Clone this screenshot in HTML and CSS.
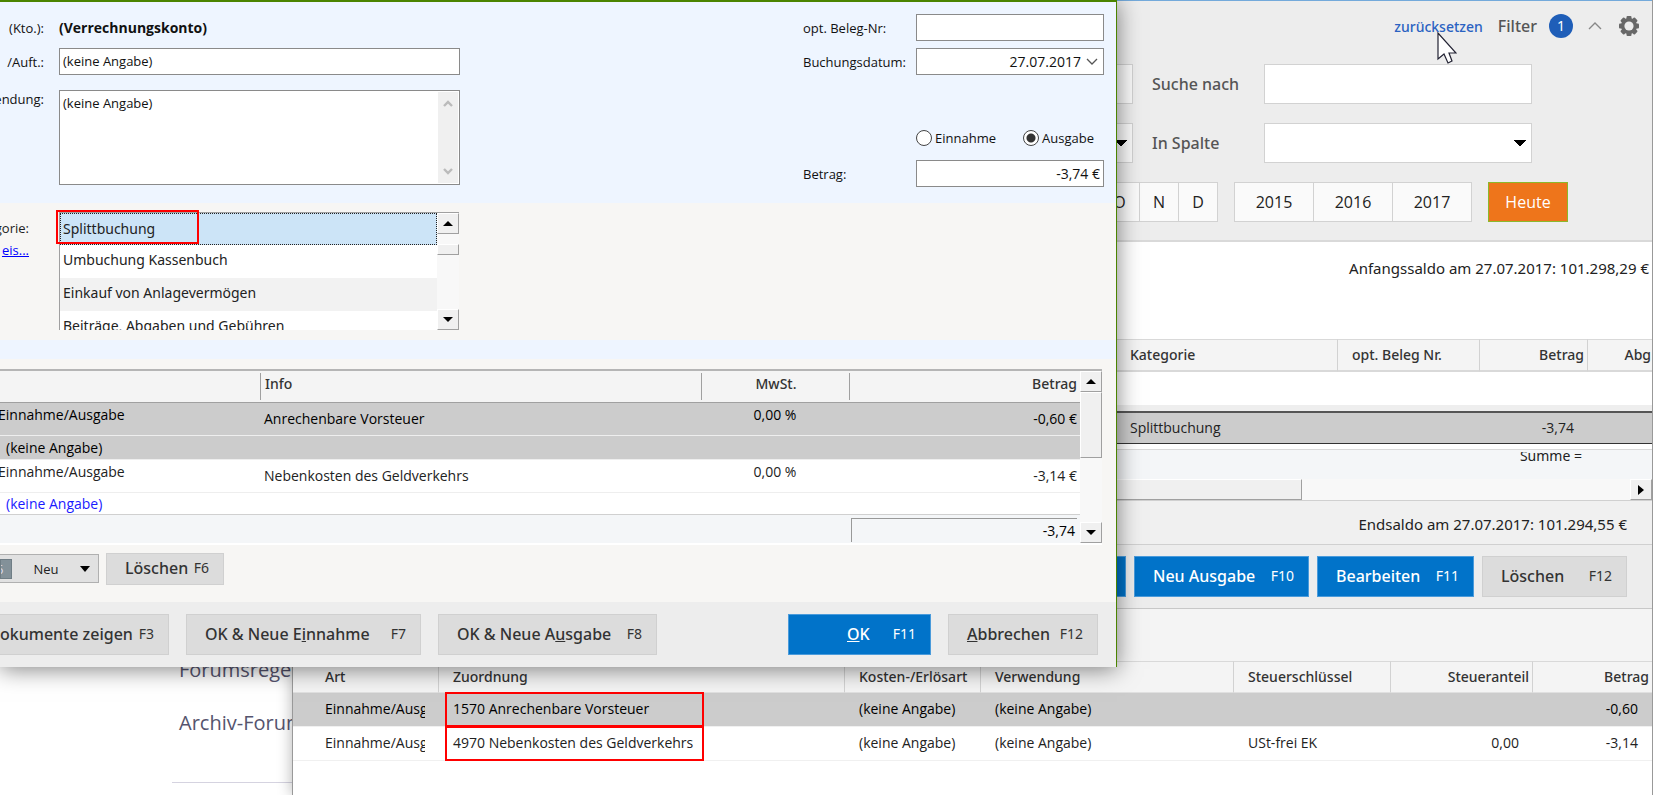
FILE: index.html
```html
<!DOCTYPE html>
<html lang="de">
<head>
    <meta charset="UTF-8">
    <meta name="viewport" content="width=device-width, initial-scale=1.0">
    <title>Splittbuchung</title>
    <link rel="stylesheet" href="styles.css">
</head>
<body>

    <!-- Forum im Hintergrund -->
    <nav class="forum">
        <a href="#">Forumsregeln</a>
        <a href="#">Archiv-Forum</a>
    </nav>

    <!-- Hauptfenster -->
    <main class="main-window">
        <section class="filter">
            <div class="filter-head">
                <a href="#" class="reset">zurücksetzen</a>
                <span class="filter-title">Filter</span>
                <span class="badge">1</span>
                <svg class="chevron" width="14" height="8" viewBox="0 0 14 8"><path d="M1 7l6-6 6 6" fill="none" stroke="#888" stroke-width="1.4"/></svg>
                <svg class="gear" width="22" height="22" viewBox="0 0 22 22">
                    <g fill="#686868">
                        <rect x="8.5" y="1" width="5" height="20" rx="1"/>
                        <rect x="8.5" y="1" width="5" height="20" rx="1" transform="rotate(45 11 11)"/>
                        <rect x="8.5" y="1" width="5" height="20" rx="1" transform="rotate(90 11 11)"/>
                        <rect x="8.5" y="1" width="5" height="20" rx="1" transform="rotate(135 11 11)"/>
                        <circle cx="11" cy="11" r="8"/>
                    </g>
                    <circle cx="11" cy="11" r="4.6" fill="#ededed"/>
                </svg>
            </div>
            <div class="filter-row">
                <input type="text" class="filter-field first" aria-label="Zeitraum">
                <label for="search">Suche nach</label>
                <input type="text" id="search" class="filter-field">
            </div>
            <div class="filter-row">
                <select class="filter-field first" aria-label="Konto"><option></option></select>
                <label for="column">In Spalte</label>
                <select id="column" class="filter-field"><option></option></select>
            </div>
            <div class="filter-row periods">
                <div class="group months">
                    <button>O</button><button>N</button><button>D</button>
                </div>
                <div class="group years">
                    <button>2015</button><button>2016</button><button>2017</button>
                </div>
                <button class="today">Heute</button>
            </div>
        </section>

        <p class="opening">Anfangssaldo am 27.07.2017: 101.298,29 €</p>

        <table class="bookings">
            <colgroup><col><col class="c-cat"><col class="c-doc"><col class="c-sum"><col class="c-abg"></colgroup>
            <thead>
                <tr><th></th><th>Kategorie</th><th>opt. Beleg Nr.</th><th class="num">Betrag</th><th class="num">Abg</th></tr>
            </thead>
            <tbody>
                <tr class="empty"><td colspan="5"></td></tr>
                <tr class="selected"><td></td><td>Splittbuchung</td><td></td><td class="num">-3,74</td><td></td></tr>
            </tbody>
        </table>
        <div class="total"><span>Summe =</span></div>
        <div class="hscroll">
            <div class="thumb"></div>
            <button class="scroll-btn" aria-label="Nach rechts"><svg width="6" height="10" viewBox="0 0 6 10"><path d="M0 0l6 5-6 5z"/></svg></button>
        </div>
        <p class="closing">Endsaldo am 27.07.2017: 101.294,55 €</p>
        <div class="actions">
            <button class="btn primary stub" aria-label="Neu Einnahme"></button>
            <button class="btn primary b-new">Neu Ausgabe<kbd>F10</kbd></button>
            <button class="btn primary b-edit">Bearbeiten<kbd>F11</kbd></button>
            <button class="btn b-del">Löschen<kbd>F12</kbd></button>
        </div>
        <div class="spacer"></div>

        <table class="details">
            <colgroup><col class="d-art"><col><col class="d-cost"><col class="d-use"><col class="d-key"><col class="d-tax"><col class="d-sum"></colgroup>
            <thead>
                <tr><th>Art</th><th>Zuordnung</th><th>Kosten-/Erlösart</th><th>Verwendung</th><th>Steuerschlüssel</th><th class="num">Steueranteil</th><th class="num">Betrag</th></tr>
            </thead>
            <tbody>
                <tr class="selected">
                    <td><div class="clip">Einnahme/Ausgabe</div></td>
                    <td class="marked">1570 Anrechenbare Vorsteuer</td>
                    <td>(keine Angabe)</td><td>(keine Angabe)</td><td></td><td></td><td class="num">-0,60</td>
                </tr>
                <tr>
                    <td><div class="clip">Einnahme/Ausgabe</div></td>
                    <td class="marked">4970 Nebenkosten des Geldverkehrs</td>
                    <td>(keine Angabe)</td><td>(keine Angabe)</td><td>USt-frei EK</td><td class="num">0,00</td><td class="num">-3,14</td>
                </tr>
            </tbody>
        </table>
    </main>

    <!-- Buchungsdialog -->
    <form class="dialog">
        <section class="head-form">
            <div class="form-left">
                <div class="row"><span class="lbl">(Kto.):</span><strong>(Verrechnungskonto)</strong></div>
                <div class="row"><label class="lbl" for="payee">/Auft.:</label><input type="text" id="payee" class="field" value="(keine Angabe)"></div>
                <div class="row note-row">
                    <label class="lbl" for="note">endung:</label>
                    <div class="note">
                        <textarea id="note">(keine Angabe)</textarea>
                        <div class="note-scroll">
                            <svg width="10" height="8" viewBox="0 0 10 8"><path d="M1 6l4-4 4 4" fill="none" stroke="#bbb" stroke-width="2.4"/></svg>
                            <svg width="10" height="8" viewBox="0 0 10 8"><path d="M1 2l4 4 4-4" fill="none" stroke="#bbb" stroke-width="2.4"/></svg>
                        </div>
                    </div>
                </div>
            </div>
            <div class="form-right">
                <div class="row"><label for="doc">opt. Beleg-Nr:</label><input type="text" id="doc" class="field"></div>
                <div class="row"><label for="date">Buchungsdatum:</label><select id="date" class="field date"><option>27.07.2017</option></select></div>
                <div class="row radios">
                    <label><input type="radio" name="kind">Einnahme</label>
                    <label><input type="radio" name="kind" checked>Ausgabe</label>
                </div>
                <div class="row"><label for="amount">Betrag:</label><input type="text" id="amount" class="field amount" value="-3,74 €"></div>
            </div>
        </section>

        <section class="category">
            <div class="cat-label"><span>gorie:</span><a href="#">eis...</a></div>
            <div class="listbox">
                <ul role="listbox" aria-label="Kategorie">
                    <li role="option" aria-selected="true">Splittbuchung</li>
                    <li role="option">Umbuchung Kassenbuch</li>
                    <li role="option">Einkauf von Anlagevermögen</li>
                    <li role="option">Beiträge, Abgaben und Gebühren</li>
                </ul>
                <div class="vscroll">
                    <button type="button" class="scroll-btn" aria-label="Nach oben"><svg width="10" height="5" viewBox="0 0 10 5"><path d="M0 5l5-5 5 5z"/></svg></button>
                    <div class="thumb"></div>
                    <button type="button" class="scroll-btn" aria-label="Nach unten"><svg width="10" height="5" viewBox="0 0 10 5"><path d="M0 0l5 5 5-5z"/></svg></button>
                </div>
                <div class="marker"></div>
            </div>
        </section>

        <div class="strip"></div>

        <section class="splits">
            <div class="grid-box">
                <div class="grid-content">
                    <table class="split-table">
                        <colgroup><col class="s-kind"><col><col class="s-vat"><col class="s-sum"></colgroup>
                        <thead>
                            <tr><th></th><th>Info</th><th class="mid">MwSt.</th><th class="num">Betrag</th></tr>
                        </thead>
                        <tbody>
                            <tr class="entry selected"><td>Einnahme/Ausgabe</td><td class="low">Anrechenbare Vorsteuer</td><td class="mid">0,00 %</td><td class="num low">-0,60 €</td></tr>
                            <tr class="sub selected"><td colspan="4">(keine Angabe)</td></tr>
                            <tr class="entry"><td>Einnahme/Ausgabe</td><td class="low">Nebenkosten des Geldverkehrs</td><td class="mid">0,00 %</td><td class="num low">-3,14 €</td></tr>
                            <tr class="sub link"><td colspan="4">(keine Angabe)</td></tr>
                        </tbody>
                    </table>
                    <div class="split-total"><output>-3,74</output></div>
                </div>
                <div class="vscroll">
                    <button type="button" class="scroll-btn" aria-label="Nach oben"><svg width="10" height="5" viewBox="0 0 10 5"><path d="M0 5l5-5 5 5z"/></svg></button>
                    <div class="thumb"></div>
                    <button type="button" class="scroll-btn" aria-label="Nach unten"><svg width="10" height="5" viewBox="0 0 10 5"><path d="M0 0l5 5 5-5z"/></svg></button>
                </div>
            </div>
            <div class="split-actions">
                <button type="button" class="new-btn"><kbd>6</kbd><span>Neu</span><svg width="10" height="6" viewBox="0 0 10 6"><path d="M0 0h10L5 6z"/></svg></button>
                <button type="button" class="btn small">Löschen<kbd>F6</kbd></button>
            </div>
        </section>

        <footer class="dialog-footer">
            <button type="button" class="btn f-docs">okumente zeigen<kbd>F3</kbd></button>
            <button type="button" class="btn f-in"><span>OK &amp; Neue E<u>i</u>nnahme</span><kbd>F7</kbd></button>
            <button type="button" class="btn f-out"><span>OK &amp; Neue A<u>u</u>sgabe</span><kbd>F8</kbd></button>
            <button type="button" class="btn primary f-ok"><span><u>O</u>K</span><kbd>F11</kbd></button>
            <button type="button" class="btn f-cancel"><span><u>A</u>bbrechen</span><kbd>F12</kbd></button>
        </footer>
    </form>

    <svg class="cursor" width="20" height="32" viewBox="0 0 20 32"><path d="M1 1v26l6-5 4 9 4-2-3-8h7z" fill="#fff" stroke="#223" stroke-width="1.2"/></svg>

</body>
</html>
```
FILE: styles.css
```css
*, *::after {
    box-sizing: border-box;
}
body {
    font-family: 'Open Sans', 'Noto Sans', sans-serif;
    font-size: 14px;
    color: #222;
    background-color: #fff;
    margin: 0;
    position: relative;
    height: 100vh;
    overflow: hidden;
}
p {
    margin: 0;
}
button, input, select, textarea {
    font: inherit;
    color: inherit;
    margin: 0;
}
button {
    padding: 0;
}
kbd {
    font-family: inherit;
}
select {
    appearance: none;
    border-radius: 0;
}
table {
    width: 100%;
    table-layout: fixed;
    border-collapse: separate;
    border-spacing: 0;
}
th {
    font-weight: 500;
    text-align: left;
    color: #333;
}
th, td {
    padding: 0;
    white-space: nowrap;
}
th, .btn, .filter-head, .filter-row label, .opening, .closing, .total, .listbox {
    font-family: 'Noto Sans', 'Open Sans', sans-serif;
}
.num {
    text-align: right;
}

/* Forum */
.forum {
    position: absolute;
    left: 172px;
    bottom: 12px;
    width: 300px;
    border-bottom: 1px solid #d5d3e0;
    padding: 0 0 33px 7px;
}
.forum a {
    display: block;
    color: #55546e;
    font-size: 20px;
    line-height: 53px;
    text-decoration: none;
}

/* Hauptfenster */
.main-window {
    position: absolute;
    top: 0;
    right: 0;
    bottom: 0;
    left: 292px;
    background-color: #fff;
    border-left: 1px solid #999;
    border-right: 1px solid #999;
    box-shadow: 0 0 14px rgba(0, 0, 0, 0.3);
}
.filter {
    background-color: #ededed;
    border-top: 1px solid #74aadb;
    border-bottom: 2px solid #d9d9d9;
    height: 242px;
}
.filter-head {
    display: flex;
    justify-content: flex-end;
    align-items: center;
    height: 50px;
    padding-right: 12px;
}
.reset {
    color: #2a62c2;
    font-weight: 500;
    text-decoration: none;
    margin-right: 15px;
}
.filter-title {
    font-size: 16px;
    font-weight: 500;
    color: #555;
    margin-right: 12px;
}
.badge {
    width: 24px;
    height: 24px;
    border-radius: 50%;
    background-color: #1f5eb8;
    color: #fff;
    line-height: 24px;
    text-align: center;
    margin-right: 15px;
}
.chevron {
    margin-right: 16px;
}
.filter-row {
    display: flex;
    justify-content: flex-end;
    align-items: center;
    height: 40px;
    margin: 13px 120px 19px 24px;
}
.filter-row + .filter-row {
    margin-top: 0;
}
.filter-row label {
    width: 131px;
    padding-left: 19px;
    font-size: 16px;
    font-weight: 500;
    color: #555;
}
.filter-field {
    width: 268px;
    height: 40px;
    border: 1px solid #d2d2d2;
    background-color: #fff;
    padding: 0 10px;
}
.filter-field.first {
    flex: 1;
    background-color: #fafafa;
}
select.filter-field {
    background-image: linear-gradient(to bottom left, #000 50%, transparent 52%), linear-gradient(to bottom right, #000 50%, transparent 52%);
    background-size: 6px 6px;
    background-position: right 11px center, right 5px center;
    background-repeat: no-repeat;
}
.filter-row.periods {
    margin-right: 84px;
    gap: 16px;
}
.group {
    display: flex;
    height: 40px;
    border: 1px solid #d2d2d2;
}
.group button {
    width: 39px;
    border: 0;
    background-color: #fafafa;
    font-size: 16px;
}
.group button + button {
    border-left: 1px solid #d2d2d2;
}
.years {
    width: 238px;
}
.years button {
    flex: 1;
}
.today {
    width: 80px;
    height: 40px;
    border: 1px solid #8cb82b;
    background-color: #ee751b;
    color: #fff;
    font-size: 16px;
}
.opening, .closing {
    font-size: 15px;
    text-align: right;
}
.opening {
    height: 97px;
    padding: 13px 3px 0 0;
    line-height: 26px;
}
.bookings th {
    height: 33px;
    background-color: #f4f4f4;
    border-top: 1px solid #d9d9d9;
    border-bottom: 2px solid #d9d9d9;
    border-right: 1px solid #d2d2d2;
    padding: 0 3px 2px 14px;
}
.bookings th:last-child {
    border-right: 0;
    padding-right: 1px;
}
.bookings .empty td {
    height: 39px;
    background: linear-gradient(#fff 33px, #eee 33px);
}
.bookings .selected td {
    height: 33px;
    background-color: #ccc;
    border-top: 2px solid #555;
    border-bottom: 1px solid #333;
    padding: 0 14px 2px;
}
.c-cat {
    width: 222px;
}
.c-doc {
    width: 142px;
}
.c-sum {
    width: 108px;
}
.c-abg {
    width: 64px;
}
.total {
    height: 30px;
    margin-top: 5px;
    border-top: 1px solid #d9d9d9;
    background-color: #f4f6f8;
    padding: 2px 70px 0 0;
    overflow: hidden;
}
.total span {
    display: flex;
    align-items: flex-end;
    justify-content: flex-end;
    height: 14px;
    line-height: 20px;
    overflow: hidden;
}
.hscroll {
    display: flex;
    justify-content: space-between;
    height: 21px;
    background-color: #f8f8f8;
}
.hscroll .thumb {
    width: 1009px;
}
.thumb, .scroll-btn {
    background-color: #f0f0f0;
    border: 1px solid #fff;
    border-right-color: #a0a0a0;
    border-bottom-color: #a0a0a0;
}
.scroll-btn {
    display: flex;
    align-items: center;
    justify-content: center;
    width: 22px;
    height: 21px;
}
.closing {
    height: 44px;
    border-top: 1px solid #d0d0d0;
    background-color: #f0f0f0;
    padding-right: 25px;
    line-height: 46px;
}
.actions {
    display: flex;
    justify-content: flex-end;
    align-items: center;
    gap: 8px;
    height: 65px;
    border-top: 1px solid #d0d0d0;
    border-bottom: 1px solid #c8c8c8;
    background-color: #ededed;
    padding-right: 25px;
}
.btn {
    display: flex;
    justify-content: space-between;
    align-items: center;
    height: 41px;
    padding: 0 14px 2px 18px;
    border: 1px solid #d0d0d0;
    background-color: #dcdcdc;
    color: #333;
    font-size: 16px;
    font-weight: 500;
    white-space: nowrap;
}
.btn kbd {
    font-size: 14px;
    font-weight: 400;
}
.btn.primary {
    background-color: #0173c9;
    border-color: #4a9bdb;
    color: #fff;
}
.stub {
    width: 120px;
}
.b-new {
    width: 175px;
}
.b-edit {
    width: 157px;
}
.b-del {
    width: 145px;
}
.spacer {
    height: 52px;
    background-color: #f4f4f4;
}
.details th {
    height: 32px;
    background-color: #f4f4f4;
    border-top: 1px solid #d9d9d9;
    border-bottom: 1px solid #e0e0e0;
    border-right: 1px solid #d2d2d2;
    padding: 0 3px 2px 14px;
}
.details th:last-child {
    border-right: 0;
}
.details td {
    height: 34px;
    border-bottom: 1px solid #f0f0f0;
    padding: 0 14px 2px;
}
.details th:first-child, .details td:first-child {
    padding-left: 32px;
}
.details .selected td {
    background-color: #ccc;
    color: #000;
}
.clip {
    overflow: hidden;
}
.marked {
    position: relative;
}
.marked::after {
    content: '';
    position: absolute;
    top: -1px;
    left: 6px;
    width: 259px;
    height: 35px;
    border: 2px solid #f00;
}
.d-art {
    width: 146px;
}
.d-cost {
    width: 136px;
}
.d-use {
    width: 253px;
}
.d-key {
    width: 157px;
}
.d-tax {
    width: 142px;
}
.d-sum {
    width: 119px;
}

/* Dialog */
.dialog {
    position: absolute;
    top: 0;
    left: 0;
    right: 536px;
    background-color: #f7f6f4;
    border-top: 2px solid #4b8400;
    border-right: 1px solid #4b8400;
    box-shadow: 0 2px 22px rgba(0, 0, 0, 0.5);
}
.head-form {
    display: flex;
    justify-content: space-between;
    height: 201px;
    padding: 12px 12px 0 0;
    background-color: #eef5ff;
    font-size: 13px;
    color: #111;
}
.row {
    display: flex;
    align-items: center;
    height: 27px;
    margin-bottom: 7px;
}
.row strong {
    font-size: 14px;
}
.lbl {
    width: 44px;
    margin-right: 15px;
    display: flex;
    justify-content: flex-end;
    flex-shrink: 0;
}
.field {
    height: 27px;
    border: 1px solid #8a8a8a;
    background-color: #fff;
    padding: 0 3px 1px;
}
.form-left .field, .note {
    width: 401px;
}
.note-row {
    align-items: flex-start;
    height: 95px;
    margin-top: 15px;
}
.note {
    display: flex;
    height: 95px;
    border: 1px solid #8a8a8a;
    background-color: #fff;
    padding: 1px;
}
.note textarea {
    flex: 1;
    border: 0;
    resize: none;
    padding: 2px;
}
.note-scroll {
    display: flex;
    flex-direction: column;
    justify-content: space-between;
    align-items: center;
    width: 20px;
    padding: 8px 0;
    background-color: #f0f0f0;
}
.form-right {
    width: 301px;
}
.form-right .row > label:first-child {
    flex: 1;
}
.form-right .field {
    width: 188px;
    font-size: 14px;
}
.form-right .date {
    text-align: right;
    text-align-last: right;
    padding-right: 22px;
    background: #fff url("data:image/svg+xml,%3Csvg xmlns='http://www.w3.org/2000/svg' width='12' height='8'%3E%3Cpath d='M1 1l5 5 5-5' fill='none' stroke='%23555' stroke-width='1.3'/%3E%3C/svg%3E") no-repeat right 5px center;
}
.amount {
    text-align: right;
}
.form-right .radios {
    justify-content: space-between;
    margin: 49px 10px 9px 113px;
}
.form-right .radios label {
    display: flex;
    flex: none;
    align-items: center;
    gap: 3px;
}
.radios input {
    appearance: none;
    width: 16px;
    height: 16px;
    border: 1px solid #444;
    border-radius: 50%;
    background-color: #fff;
}
.radios input:checked {
    background: radial-gradient(circle, #333 4px, #fff 5px);
}
.category {
    display: flex;
    height: 137px;
    padding-top: 9px;
}
.cat-label {
    display: flex;
    flex-direction: column;
    align-items: flex-end;
    width: 29px;
    margin-right: 30px;
    padding-top: 5px;
    font-size: 13px;
    line-height: 22px;
}
.cat-label a {
    color: #00f;
}
.listbox {
    position: relative;
    display: flex;
    width: 400px;
    height: 118px;
    border-top: 1px solid #a0a0a0;
    border-left: 1px solid #a0a0a0;
}
.listbox ul {
    flex: 1;
    margin: 0;
    padding: 0;
    list-style: none;
    overflow: hidden;
    background-color: #fff;
}
.listbox li {
    height: 33px;
    border: 1px solid transparent;
    padding-left: 2px;
    line-height: 28px;
}
.listbox li:nth-child(odd) {
    background-color: #f2f2f2;
}
.listbox li[aria-selected="true"] {
    height: 32px;
    line-height: 30px;
    background-color: #cce4f7;
    border: 1px dotted #222;
}
.marker {
    position: absolute;
    top: -3px;
    left: -4px;
    width: 143px;
    height: 34px;
    border: 2px solid #f00;
}
.vscroll {
    display: flex;
    flex-direction: column;
    justify-content: space-between;
    width: 22px;
    background-color: #f8f8f8;
}
.listbox .thumb {
    height: 11px;
    margin-bottom: 44px;
}
.strip {
    height: 19px;
    background-color: #eef5ff;
}
.splits {
    height: 243px;
    padding-top: 10px;
}
.grid-box {
    display: flex;
    height: 176px;
    margin-right: 14px;
    border-top: 2px solid #b5b5b5;
    border-bottom: 2px solid #fff;
}
.grid-content {
    flex: 1;
    margin-left: -2px;
}
.grid-box .thumb {
    height: 66px;
    margin-bottom: auto;
}
.split-table th {
    height: 32px;
    background-color: #f4f4f4;
    border-bottom: 1px solid #a0a0a0;
    padding: 0 3px 6px 5px;
}
.split-table th + th {
    background: linear-gradient(#a0a0a0, #a0a0a0) 0 2px / 1px 27px no-repeat #f4f4f4;
}
.split-table td {
    background-color: #fff;
    border-bottom: 1px solid #eee;
}
.entry td {
    height: 33px;
    padding-bottom: 9px;
}
.split-table .low {
    padding: 0 3px 2px 4px;
}
.split-table .mid {
    text-align: center;
}
.sub td {
    height: 24px;
    padding-left: 8px;
}
.sub.link td {
    height: 22px;
    color: #1a1aff;
    border-bottom: 1px solid #d0d0d0;
}
.split-table .selected td {
    background-color: #ccc;
    color: #000;
}
.s-kind {
    width: 262px;
}
.s-vat {
    width: 148px;
}
.s-sum {
    width: 231px;
}
.split-total {
    display: flex;
    justify-content: flex-end;
    height: 28px;
    padding: 3px 3px 1px 0;
    background-color: #f4f6f8;
}
.split-total output {
    width: 226px;
    border-top: 1px solid #999;
    border-left: 1px solid #999;
    padding-right: 2px;
    line-height: 24px;
    text-align: right;
    color: #000;
}
.split-actions {
    display: flex;
    align-items: center;
    gap: 7px;
    height: 47px;
}
.new-btn {
    display: flex;
    align-items: center;
    justify-content: space-between;
    width: 99px;
    height: 29px;
    padding-right: 8px;
    border: 1px solid #b0b0b0;
    border-left: 0;
    background-color: #e1e1e1;
    font-size: 13px;
}
.new-btn kbd {
    width: 12px;
    height: 20px;
    line-height: 18px;
    background-color: #839199;
    border: 1px solid #6f7d85;
    color: #dde;
    text-align: left;
    text-indent: -5px;
    overflow: hidden;
}
.btn.small {
    width: 118px;
    height: 32px;
}
.dialog-footer {
    display: flex;
    align-items: center;
    height: 65px;
    padding-right: 18px;
    background-color: #ededed;
}
.f-docs {
    width: 169px;
    padding-left: 0;
    border-left: 0;
}
.f-in {
    width: 235px;
    margin-left: 17px;
}
.f-out {
    width: 219px;
    margin-left: 17px;
}
.f-ok {
    width: 143px;
    margin-left: auto;
    padding-left: 58px;
}
.f-cancel {
    width: 150px;
    margin-left: 17px;
}
.cursor {
    position: absolute;
    top: 32px;
    right: 196px;
}
```
